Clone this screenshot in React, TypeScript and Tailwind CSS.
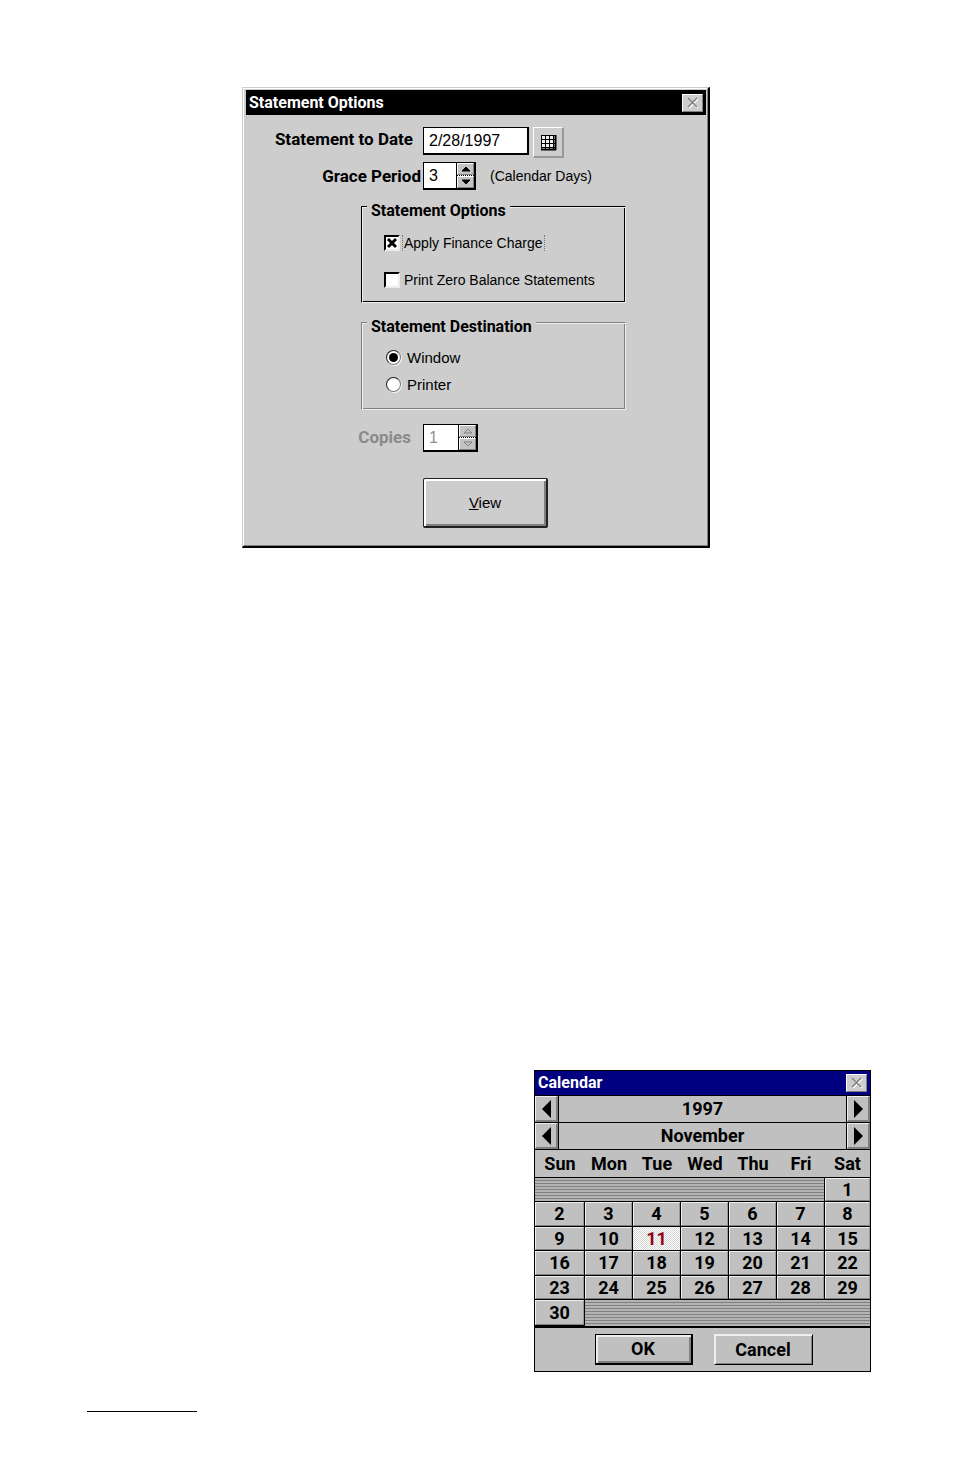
import { useState, ReactNode } from "react";

const weekdays = ["Sun", "Mon", "Tue", "Wed", "Thu", "Fri", "Sat"];

const fullWeeks = [2, 9, 16, 23].map((start) =>
  weekdays.map((_, index) => start + index)
);

const CloseButton = () => (
  <button
    type="button"
    aria-label="Close"
    className="flex h-[18px] w-[21px] items-center justify-center border border-t-white border-l-white border-r-[#808080] border-b-[#808080] bg-[#cdcdcd]"
  >
    <svg viewBox="0 0 14 12" className="h-3 w-3.5" fill="none">
      <path d="M3 2l9 9M12 2l-9 9" stroke="#fff" strokeWidth="1.5" />
      <path d="M2 1l9 9M11 1l-9 9" stroke="#808080" strokeWidth="1.5" />
    </svg>
  </button>
);

interface SpinnerProps {
  id: string;
  value: number;
  onChange: (value: number) => void;
  disabled?: boolean;
}

const Spinner = ({ id, value, onChange, disabled }: SpinnerProps) => {
  const buttonClass =
    "flex flex-1 items-center justify-center border border-t-white border-l-white border-r-[#808080] border-b-[#808080] bg-[#c4c4c4]";
  const arrowFill = disabled ? "#c4c4c4" : "#000";
  const arrowStroke = disabled ? "#808080" : "#000";

  return (
    <div className="flex h-7 border border-r-2 border-b-2 border-black bg-white">
      <input
        id={id}
        type="text"
        value={value}
        disabled={disabled}
        onChange={(e) => onChange(Number(e.target.value) || 0)}
        className="w-8 bg-white pl-[5px] text-base outline-none disabled:w-[34px] disabled:text-[#909090]"
      />
      <div className="flex w-[18px] flex-col border-l border-black">
        <button
          type="button"
          aria-label="Increase"
          disabled={disabled}
          onClick={() => onChange(value + 1)}
          className={buttonClass}
        >
          <svg viewBox="0 0 10 6" className="h-1.5 w-2.5">
            <path d="M5 1L9 5H1z" fill={arrowFill} stroke={arrowStroke} />
          </svg>
        </button>
        <div className="border-t border-dotted border-black" />
        <button
          type="button"
          aria-label="Decrease"
          disabled={disabled}
          onClick={() => onChange(value - 1)}
          className={buttonClass}
        >
          <svg viewBox="0 0 10 6" className="h-1.5 w-2.5">
            <path d="M5 5L9 1H1z" fill={arrowFill} stroke={arrowStroke} />
          </svg>
        </button>
      </div>
    </div>
  );
};

interface CheckOptionProps {
  label: string;
  checked: boolean;
  focused?: boolean;
  onChange: (checked: boolean) => void;
}

const CheckOption = ({ label, checked, focused, onChange }: CheckOptionProps) => (
  <label className="flex h-[18px] items-center gap-0.5 text-sm">
    <span className="grid size-4">
      <input
        type="checkbox"
        checked={checked}
        onChange={(e) => onChange(e.target.checked)}
        className="col-start-1 row-start-1 size-4 appearance-none border-2 border-t-black border-l-black border-r-[#ececec] border-b-[#ececec] bg-white"
      />
      {checked && (
        <svg
          viewBox="0 0 16 16"
          className="pointer-events-none col-start-1 row-start-1 size-4"
        >
          <path d="M4 4l8 8M12 4l-8 8" stroke="#000" strokeWidth="3" />
        </svg>
      )}
    </span>
    <span
      className={
        focused
          ? "border-x border-dotted border-x-[#777] px-px leading-4"
          : "border-x border-transparent px-px leading-4"
      }
    >
      {label}
    </span>
  </label>
);

interface RadioOptionProps {
  label: string;
  checked: boolean;
  onSelect: () => void;
}

const RadioOption = ({ label, checked, onSelect }: RadioOptionProps) => (
  <label className="flex h-[27px] items-center gap-1.5">
    <span className="grid size-4 place-items-center">
      <input
        type="radio"
        name="destination"
        checked={checked}
        onChange={onSelect}
        className="col-start-1 row-start-1 size-[15px] appearance-none rounded-full border border-t-[#222] border-r-[#777] border-b-[#777] border-l-[#222] bg-white shadow-[1px_1px_#f4f4f4]"
      />
      {checked && (
        <span className="pointer-events-none col-start-1 row-start-1 size-[9px] rounded-full bg-black" />
      )}
    </span>
    {label}
  </label>
);

const StatementDialog = () => {
  const [date, setDate] = useState("2/28/1997");
  const [grace, setGrace] = useState(3);
  const [copies, setCopies] = useState(1);
  const [financeCharge, setFinanceCharge] = useState(true);
  const [zeroBalance, setZeroBalance] = useState(false);
  const [destination, setDestination] = useState("window");

  return (
    <section className="w-[468px] border border-t-[#cdcdcd] border-r-2 border-r-black border-b-2 border-b-black border-l-[#cdcdcd]">
      <div className="border border-t-white border-r-[#808080] border-b-[#808080] border-l-white bg-[#cdcdcd] pt-px pr-px pb-[17px] pl-0.5 font-['Liberation_Sans',Arial,sans-serif] text-[15px] leading-[18px]">
        <header className="flex h-[25px] items-center justify-between bg-black pr-[3px] pl-[3px]">
          <h1 className="font-[Roboto,sans-serif] text-base font-bold text-white">
            Statement Options
          </h1>
          <CloseButton />
        </header>

        <form onSubmit={(e) => e.preventDefault()}>
          <div className="mt-3 flex items-start">
            <label
              htmlFor="statement-date"
              className="w-[177px] pt-[3px] pr-2.5 text-right font-[Roboto,sans-serif] text-[17px] leading-[18px] font-bold"
            >
              Statement to Date
            </label>
            <input
              id="statement-date"
              type="text"
              value={date}
              onChange={(e) => setDate(e.target.value)}
              className="h-7 w-[106px] border border-r-2 border-b-2 border-black bg-white pl-[5px] text-base outline-none"
            />
            <button
              type="button"
              aria-label="Open calendar"
              className="ml-1 flex size-[31px] items-center justify-center border border-r-2 border-b-2 border-t-white border-l-white border-r-[#999] border-b-[#999]"
            >
              <svg viewBox="0 0 17 17" className="size-[17px]">
                <path d="M1 1h14v14H1z" fill="#eee" />
                <path
                  d="M1.5 1v14M5.5 1v14M9.5 1v14M13.5 1v14M1 1.5h14M1 5.5h14M1 9.5h14M1 13.5h14"
                  stroke="#000"
                />
                <path d="M15.5 1v15M1 15.5h15" stroke="#000" strokeWidth="2" />
              </svg>
            </button>
          </div>

          <div className="mt-1 flex items-start">
            <label
              htmlFor="grace-period"
              className="w-[177px] pt-[5px] pr-0.5 text-right font-[Roboto,sans-serif] text-[17px] leading-[18px] font-bold"
            >
              Grace Period
            </label>
            <Spinner id="grace-period" value={grace} onChange={setGrace} />
            <span className="ml-3.5 pt-[5px] text-sm leading-[18px]">(Calendar Days)</span>
          </div>

          <fieldset className="mt-[2px] ml-[115px] h-[111px] w-[265px] border border-t-black border-r-[#eee] border-b-[#eee] border-l-black pl-[22px] shadow-[inset_1px_1px_#eee,inset_-1px_-1px_#000]">
            <legend className="-ml-[17px] bg-[#cdcdcd] px-1 pt-2.5 font-[Roboto,sans-serif] text-base leading-[18px] font-bold">
              Statement Options
            </legend>
            <div className="flex flex-col gap-[19px] pt-3.5">
              <CheckOption
                label="Apply Finance Charge"
                checked={financeCharge}
                onChange={setFinanceCharge}
                focused
              />
              <CheckOption
                label="Print Zero Balance Statements"
                checked={zeroBalance}
                onChange={setZeroBalance}
              />
            </div>
          </fieldset>

          <fieldset className="mt-[5px] ml-[115px] h-[102px] w-[265px] border border-t-[#808080] border-r-[#eee] border-b-[#eee] border-l-[#808080] pl-[23px] shadow-[inset_1px_1px_#eee,inset_-1px_-1px_#808080]">
            <legend className="-ml-[18px] bg-[#cdcdcd] px-1 pt-2.5 font-[Roboto,sans-serif] text-base leading-[18px] font-bold">
              Statement Destination
            </legend>
            <div className="pt-2">
              <RadioOption
                label="Window"
                checked={destination === "window"}
                onSelect={() => setDestination("window")}
              />
              <RadioOption
                label="Printer"
                checked={destination === "printer"}
                onSelect={() => setDestination("printer")}
              />
            </div>
          </fieldset>

          <div className="mt-3.5 flex items-start">
            <label
              htmlFor="copies"
              className="w-[177px] pt-1 pr-3 text-right font-[Roboto,sans-serif] text-[17px] leading-[18px] font-bold text-[#8a8a8a]"
            >
              Copies
            </label>
            <Spinner
              id="copies"
              value={copies}
              onChange={setCopies}
              disabled={destination === "window"}
            />
          </div>

          <button
            type="submit"
            className="mt-[26px] ml-[177px] block h-[50px] w-[125px] rounded-xs border border-r-2 border-b-2 border-[#222] shadow-[inset_2px_2px_#fff,inset_-2px_-2px_#808080]"
          >
            <u>V</u>iew
          </button>
        </form>
      </div>
    </section>
  );
};

const CalendarArrow = ({ direction, label }: { direction: "left" | "right"; label: string }) => (
  <button
    type="button"
    aria-label={label}
    className="flex w-[23px] items-center justify-center border border-r-2 border-b-2 border-t-[#eee] border-l-[#eee] border-r-[#808080] border-b-[#808080]"
  >
    <svg viewBox="0 0 9 18" className="h-[18px] w-[9px]">
      <path d={direction === "left" ? "M9 0v18L0 9z" : "M0 0v18L9 9z"} />
    </svg>
  </button>
);

const CalendarRow = ({ unit, children }: { unit: string; children: ReactNode }) => (
  <div className="flex h-[27px] border-t border-black">
    <CalendarArrow direction="left" label={`Previous ${unit}`} />
    <div className="flex flex-1 items-center justify-center border-x border-black">
      {children}
    </div>
    <CalendarArrow direction="right" label={`Next ${unit}`} />
  </div>
);

const Stripes = ({ last }: { last?: boolean }) => (
  <td
    colSpan={6}
    className={
      last
        ? "bg-[repeating-linear-gradient(#b4b4b4_0_2px,#808080_2px_3px)]"
        : "border-r border-b border-black bg-[repeating-linear-gradient(#b4b4b4_0_2px,#808080_2px_3px)]"
    }
  />
);

const CalendarDialog = () => {
  const [selected, setSelected] = useState(11);

  const renderDay = (day: number) => (
    <td key={day} className="h-px border-r border-b border-black p-0 last:border-r-0">
      <button
        type="button"
        onClick={() => setSelected(day)}
        className={
          day === selected
            ? "block h-full w-full bg-[repeating-conic-gradient(#fff_0_25%,#d4d4d4_0_50%)] bg-size-[2px_2px] text-[#900018]"
            : "block h-full w-full border border-t-[#eee] border-r-[#999] border-b-[#808080] border-l-[#eee]"
        }
      >
        {day}
      </button>
    </td>
  );

  return (
    <section className="w-[337px] border border-black bg-[#c0c0c0] text-lg leading-5 font-bold">
      <header className="flex h-6 items-center justify-between bg-[#000080] px-[3px]">
        <h2 className="text-base text-white">Calendar</h2>
        <CloseButton />
      </header>
      <CalendarRow unit="year">1997</CalendarRow>
      <CalendarRow unit="month">November</CalendarRow>
      <table className="w-full table-fixed border-separate border-spacing-0 border-t border-black text-center">
        <colgroup>
          {weekdays.map((name) => (
            <col key={name} className="w-12 first:w-[50px] last:w-auto" />
          ))}
        </colgroup>
        <thead>
          <tr className="h-7">
            {weekdays.map((name) => (
              <th key={name} className="border-b border-black p-0">
                {name}
              </th>
            ))}
          </tr>
        </thead>
        <tbody>
          <tr className="h-6">
            <Stripes />
            {renderDay(1)}
          </tr>
          {fullWeeks.map((week) => (
            <tr key={week[0]} className="h-6 even:h-[25px]">
              {week.map(renderDay)}
            </tr>
          ))}
          <tr className="h-[26px]">
            {renderDay(30)}
            <Stripes last />
          </tr>
        </tbody>
      </table>
      <div className="flex h-[45px] items-center justify-center gap-[21px] border-t-2 border-black pl-0.5">
        <button
          type="button"
          className="h-[31px] w-[98px] border border-r-2 border-b-2 border-black shadow-[inset_2px_2px_#eee,inset_-2px_-2px_#808080]"
        >
          OK
        </button>
        <button
          type="button"
          className="h-[31px] w-[99px] border border-t-[#eee] border-r-black border-b-black border-l-[#eee] shadow-[inset_1px_1px_#eee,inset_-1px_-1px_#808080]"
        >
          Cancel
        </button>
      </div>
    </section>
  );
};

const App = () => {
  return (
    <main className="bg-white pt-[87px] pb-16 font-[Roboto,'Liberation_Sans',sans-serif] text-black">
      <div className="flex justify-center pr-0.5">
        <StatementDialog />
      </div>
      <div className="mt-[522px] flex justify-end pr-[83px]">
        <CalendarDialog />
      </div>
      <hr className="mt-[39px] ml-[87px] w-[110px] border-t border-black" />
    </main>
  );
};

export default App;
